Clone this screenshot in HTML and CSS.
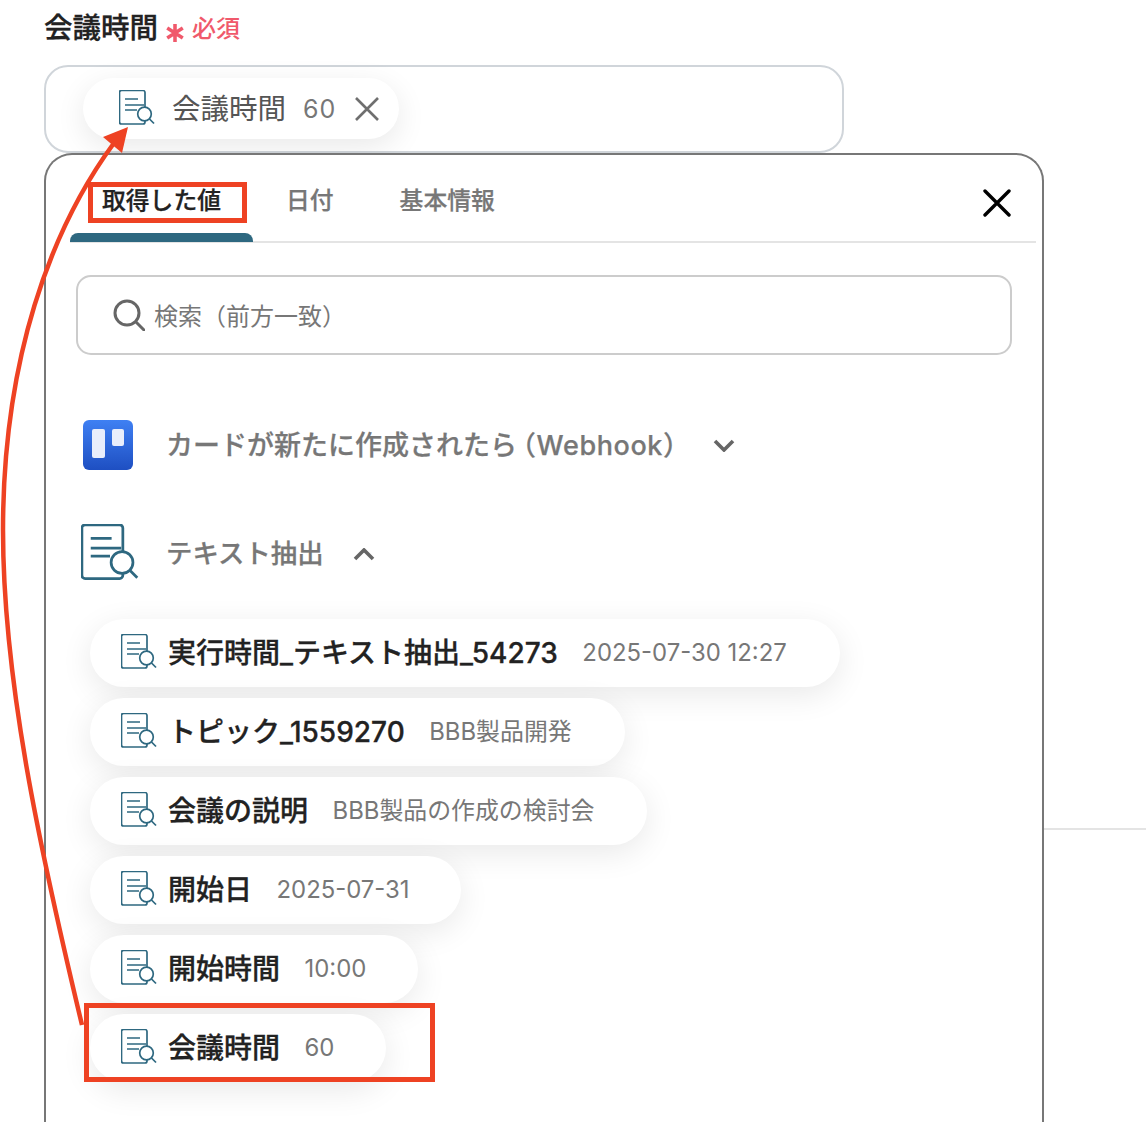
FILE: index.html
```html
<!DOCTYPE html>
<html lang="ja">
<head>
<meta charset="utf-8">
<title>会議時間</title>
<link rel="stylesheet" href="styles.css">
</head>
<body>
<svg width="0" height="0" class="defs">
  <symbol id="doc" viewBox="0 0 36 38">
    <path d="M26 17V2.500a2 2 0 0 0-2-2H2.500a2 2 0 0 0-2 2V32a2 2 0 0 0 2 2H24a2 2 0 0 0 2-2v-1" fill="none" stroke="currentColor" stroke-width="1.700"/>
    <path d="M6 9h13M6 15h19M6 20h12" fill="none" stroke="currentColor" stroke-width="1.700"/>
    <circle cx="25.500" cy="24" r="6.800" fill="#fff" stroke="currentColor" stroke-width="1.700"/>
    <path d="M30.500 29l4.500 4.500" fill="none" stroke="currentColor" stroke-width="1.700"/>
  </symbol>
</svg>
<main class="page">
  <div class="label-row">
    <span class="label">会議時間</span>
    <svg class="star" viewBox="0 0 18 16"><path d="M9 0v16M2 3.500l14 9M16 3.500l-14 9"/></svg>
    <span class="required">必須</span>
  </div>
  <div class="field">
    <div class="chip chip-selected">
      <svg class="doc-icon"><use href="#doc"/></svg>
      <span class="chip-name">会議時間</span>
      <span class="chip-val">60</span>
      <svg class="chip-x" viewBox="0 0 24 24"><path d="M1 1l22 22M23 1L1 23"/></svg>
    </div>
  </div>
  <section class="panel">
    <div class="tabs">
      <div class="tab tab-active">取得した値</div>
      <div class="tab tab-date">日付</div>
      <div class="tab tab-basic">基本情報</div>
      <svg class="close" viewBox="0 0 28 28"><path d="M2 2l24 24M26 2L2 26"/></svg>
    </div>
    <div class="search">
      <svg class="search-icon" viewBox="0 0 32 32"><circle cx="14" cy="14" r="12"/><path d="M23 23l8 8"/></svg>
      <span class="search-text">検索（前方一致）</span>
    </div>
    <div class="group group-trello">
      <svg class="trello" viewBox="0 0 50 50">
        <defs><linearGradient id="tg" x1="0" y1="0" x2="0" y2="1"><stop offset="0" stop-color="#3f80f3"/><stop offset="1" stop-color="#1e4fc2"/></linearGradient></defs>
        <rect width="50" height="50" rx="6" fill="url(#tg)"/>
        <rect x="9" y="9" width="13" height="29" rx="2" fill="#e9eefb"/>
        <rect x="29" y="9" width="12" height="17" rx="2" fill="#e9eefb"/>
      </svg>
      <span class="group-title title-card">カードが新たに作成されたら<span class="latin">（Webhook）</span></span>
      <svg class="chev chev-down" viewBox="0 0 22 13"><path d="M2 2l9 9 9-9"/></svg>
    </div>
    <div class="group group-text">
      <svg class="doc-big"><use href="#doc"/></svg>
      <span class="group-title title-text">テキスト抽出</span>
      <svg class="chev chev-up" viewBox="0 0 22 13"><path d="M2 11l9-9 9 9"/></svg>
    </div>
    <ul class="pills">
      <li class="pill pill-1"><svg class="doc-icon"><use href="#doc"/></svg><b>実行時間_テキスト抽出_54273</b><span>2025-07-30 12:27</span></li>
      <li class="pill pill-2"><svg class="doc-icon"><use href="#doc"/></svg><b>トピック_1559270</b><span>BBB製品開発</span></li>
      <li class="pill pill-3"><svg class="doc-icon"><use href="#doc"/></svg><b>会議の説明</b><span>BBB製品の作成の検討会</span></li>
      <li class="pill pill-4"><svg class="doc-icon"><use href="#doc"/></svg><b>開始日</b><span>2025-07-31</span></li>
      <li class="pill pill-5"><svg class="doc-icon"><use href="#doc"/></svg><b>開始時間</b><span>10:00</span></li>
      <li class="pill pill-6"><svg class="doc-icon"><use href="#doc"/></svg><b>会議時間</b><span>60</span></li>
    </ul>
  </section>
</main>
<div class="side-rule"></div>
<svg class="notes" viewBox="0 0 1146 1122">
  <rect x="90.500" y="184.500" width="154" height="36"/>
  <rect x="86.500" y="1005.500" width="346" height="74"/>
  <path d="M82 1025C40 850 3 680 3 530C3 360 50 230 114 143"/>
  <polygon points="128,127 103,137 122,153"/>
</svg>
</body>
</html>
```
FILE: styles.css
```css
* { box-sizing: border-box; }
html, body { margin: 0; height: 1122px; overflow: hidden; background: #fff; }
body {
  position: relative;
  font-family: Inter, "Noto Sans CJK JP", sans-serif;
  color: #222;
}
.defs { position: absolute; }
.page { padding: 0 0 0 44px; width: 1044px; height: 1122px; display: flex; flex-direction: column; }

.label-row { height: 65px; display: flex; align-items: flex-start; padding-top: 8px; flex: none; }
.label { font-size: 28.500px; font-weight: 500; -webkit-text-stroke: .3px #222; line-height: 40px; }
.star { width: 20px; height: 18px; margin: 16px 0 0 7px; fill: none; stroke: #f0596b; stroke-width: 3.200; }
.required { color: #f0596b; font-size: 24px; font-weight: 500; line-height: 40px; margin-left: 7px; margin-top: 1px; }

.field {
  width: 800px; height: 88px; border: 2px solid #d0d5da; border-radius: 24px;
  padding: 11px 0 0 37px; flex: none;
}
.chip {
  display: flex; align-items: center; height: 61px; width: 316px; border-radius: 31px; background: #fff;
  box-shadow: 0 8px 30px rgba(0,0,0,.09); padding-left: 36px;
}
.doc-icon { width: 36px; height: 38px; color: #2e6880; flex: none; }
.chip-name { font-size: 28.500px; font-weight: 400; color: #555; margin-left: 17px; line-height: 40px; }
.chip-val { font-size: 25px; color: #777; margin-left: 17px; letter-spacing: 1px; line-height: 40px; }
.chip-x { width: 24px; height: 24px; margin-left: 19px; fill: none; stroke: #6f6f6f; stroke-width: 2.600; }

.panel {
  position: relative; width: 1000px; flex: 1;
  border: 2px solid #777; border-bottom: 0; border-radius: 28px 28px 0 0; background: #fff;
  padding: 0 0 0 24px;
}
.tabs {
  position: relative; height: 88px; width: 966px; border-bottom: 2px solid #e4e4e4;
  display: flex; align-items: flex-start;
}
.tab { font-size: 23.800px; font-weight: 500; -webkit-text-stroke: .25px currentColor; line-height: 34px; padding-top: 29px; color: #777; }
.tab-active { width: 183px; height: 87px; padding-left: 32px; color: #222; position: relative; }
.tab-active::after {
  content: ""; position: absolute; left: 0; right: 0; bottom: 0; height: 9px;
  background: #2e6880; border-radius: 8px 8px 0 0;
}
.tab-date { margin-left: 33px; }
.tab-basic { margin-left: 66px; }
.close { position: absolute; left: 913px; top: 34px; width: 28px; height: 28px; fill: none; stroke: #000; stroke-width: 3.400; stroke-linecap: round; }

.search {
  margin: 32px 0 0 6px; width: 936px; height: 80px; border: 2px solid #ccc; border-radius: 15px;
  display: flex; align-items: center; padding-left: 35px; font-size: 24px; color: #777;
}
.search-icon { width: 32px; height: 32px; margin-right: 9px; fill: none; stroke: #666; stroke-width: 3; stroke-linecap: round; }
.search-text { margin-bottom: 2px; }

.group { display: flex; align-items: center; }
.group-title { font-size: 26.400px; font-weight: 500; -webkit-text-stroke: .25px #777; color: #777; line-height: 40px; }
.title-card { font-size: 27px; margin-top: 1px; }
.title-text { margin-bottom: 3px; }
.latin { letter-spacing: .6px; margin-left: -8px; }
.group-trello { margin: 65px 0 0 13px; height: 50px; }
.trello { width: 50px; height: 50px; margin-right: 33px; flex: none; }
.chev { width: 22px; height: 13px; fill: none; stroke: #666; stroke-width: 3.600; }
.chev-down { margin-left: 22px; }
.group-text { margin: 55px 0 0 11px; height: 58px; }
.doc-big { width: 58px; height: 61px; color: #2e6880; margin-right: 27px; flex: none; }
.chev-up { margin-left: 29px; }

.pills { list-style: none; margin: 36px 0 0 20px; padding: 0; display: flex; flex-direction: column; gap: 11px; align-items: flex-start; }
.pill {
  display: flex; align-items: center; height: 68px; border-radius: 34px; background: #fff; padding-left: 31px;
  box-shadow: 0 8px 32px rgba(0,0,0,.09);
}
.pill b { font-size: 28px; font-weight: 500; -webkit-text-stroke: .3px #222; color: #222; margin-left: 11px; line-height: 40px; white-space: nowrap; }
.pill span { font-size: 23.900px; line-height: 40px; color: #777; margin-left: 24.500px; white-space: nowrap; }
.pill-1 { width: 750px; }
.pill-2 { width: 535px; }
.pill-3 { width: 557px; }
.pill-4 { width: 371px; }
.pill-5 { width: 328px; }
.pill-6 { width: 296px; }

.side-rule { position: absolute; left: 1044px; top: 828px; width: 102px; height: 2px; background: #e4e4e4; }
.notes { position: absolute; left: 0; top: 0; width: 1146px; height: 1122px; pointer-events: none; }
.notes rect { fill: none; stroke: #ee4223; stroke-width: 5; }
.notes path { fill: none; stroke: #ee4223; stroke-width: 4.500; }
.notes polygon { fill: #ee4223; }
```
